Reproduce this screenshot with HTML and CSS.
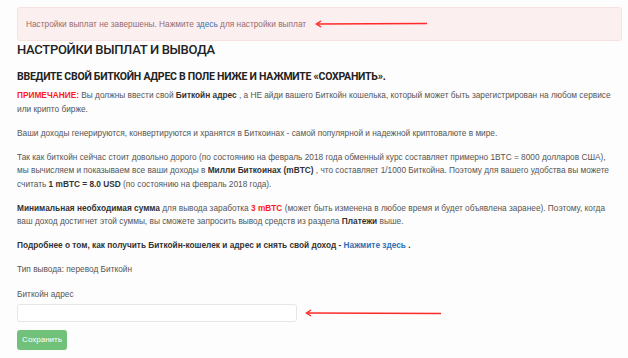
FILE: index.html
```html
<!DOCTYPE html>
<html lang="ru">
<head>
  <meta charset="UTF-8" />
  <meta name="viewport" content="width=device-width, initial-scale=1.0"/>
  <title>Настройки выплат и вывода</title>
  <link rel="stylesheet" href="styles.css">
</head>
<body>

  <div class="page">
    <div class="alert">
      <span>Настройки выплат не завершены. Нажмите <a href="#">здесь</a> для настройки выплат</span>
      <svg class="arrow arrow-top" width="114" height="8" viewBox="0 0 114 8">
        <line x1="2" y1="4" x2="112" y2="3.4" stroke="#ff2a2a" stroke-width="1.5"/>
        <path d="M6 1 L1.5 4 L6 7" fill="none" stroke="#ff2a2a" stroke-width="1.5"/>
      </svg>
    </div>

    <h1>Настройки выплат и вывода</h1>
    <h2>Введите свой Биткойн адрес в поле ниже и нажмите «Сохранить».</h2>

    <p><b class="red">ПРИМЕЧАНИЕ:</b> Вы должны ввести свой <b>Биткойн адрес</b> , а НЕ айди вашего Биткойн кошелька, который может быть зарегистрирован на любом сервисе или крипто бирже.</p>

    <p>Ваши доходы генерируются, конвертируются и хранятся в Биткоинах - самой популярной и надежной криптовалюте в мире.</p>

    <p>Так как биткойн сейчас стоит довольно дорого (по состоянию на февраль 2018 года обменный курс составляет примерно 1BTC = 8000 долларов США), мы вычисляем и показываем все ваши доходы в <b>Милли Биткоинах (mBTC)</b> , что составляет 1/1000 Биткойна. Поэтому для вашего удобства вы можете считать <b>1 mBTC = 8.0 USD</b> (по состоянию на февраль 2018 года).</p>

    <p><b>Минимальная необходимая сумма</b> для вывода заработка <b class="red">3 mBTC</b> (может быть изменена в любое время и будет объявлена заранее). Поэтому, когда ваш доход достигнет этой суммы, вы сможете запросить вывод средств из раздела <b>Платежи</b> выше.</p>

    <p><b>Подробнее о том, как получить Биткойн-кошелек и адрес и снять свой доход - <a href="#">Нажмите здесь</a> .</b></p>

    <p class="type">Тип вывода: перевод Биткойн</p>

    <form class="address-form">
      <label for="address">Биткойн адрес</label>
      <div class="field-row">
        <input type="text" id="address" />
        <svg class="arrow" width="138" height="8" viewBox="0 0 138 8">
          <line x1="2" y1="4" x2="136" y2="4.4" stroke="#ff2a2a" stroke-width="1.5"/>
          <path d="M6 1 L1.5 4 L6 7" fill="none" stroke="#ff2a2a" stroke-width="1.5"/>
        </svg>
      </div>
      <button type="button">Сохранить</button>
    </form>
  </div>

</body>
</html>
```

FILE: styles.css
```css
* {
  box-sizing: border-box;
}

body {
  margin: 0;
  padding: 0;
  background-color: #fdfdfd;
  font-family: 'Liberation Sans', Arial, sans-serif;
  font-size: 8.3px;
  color: #555;
}

.page {
  padding: 7px 6px 0 17px;
}

.alert {
  height: 34px;
  display: flex;
  align-items: center;
  padding: 0 8px;
  background-color: #fcefef;
  border: 1px solid #f7e1e1;
  border-radius: 3px;
  color: #9a6b6b;
}

.alert a {
  color: #3b73b0;
  text-decoration: none;
}

.arrow-top {
  margin-left: 9px;
}

h1 {
  margin: 0;
  font-family: Roboto, sans-serif;
  font-weight: 500;
  font-size: 13px;
  letter-spacing: -0.3px;
  line-height: 17px;
  color: #222;
  text-transform: uppercase;
}

h2 {
  margin: 12px 0 0;
  font-family: Roboto, sans-serif;
  font-weight: 700;
  font-size: 10.5px;
  letter-spacing: -0.25px;
  line-height: 14px;
  color: #222;
  text-transform: uppercase;
}

p {
  margin: 5px 0 10.5px;
  line-height: 13.5px;
  padding-right: 5px;
}

p b {
  color: #333;
}

b.red {
  color: #ff1a1a;
}

p a {
  color: #2f72b5;
  text-decoration: none;
}

.type {
  margin-bottom: 0;
}

.address-form {
  margin-top: 11px;
}

.address-form label {
  display: block;
  line-height: 13px;
  margin-bottom: 3px;
}

.field-row {
  display: flex;
  align-items: center;
  gap: 8px;
}

.field-row input {
  width: 280px;
  height: 18px;
  border: 1px solid #e6e6e6;
  border-radius: 3px;
  background: #fff;
  outline: none;
}

.address-form button {
  margin-top: 8px;
  width: 50px;
  height: 20px;
  padding: 0;
  border: none;
  border-radius: 3px;
  background-color: #72c17a;
  color: #fff;
  font-family: 'Liberation Sans', Arial, sans-serif;
  font-size: 8px;
  cursor: pointer;
}
```
